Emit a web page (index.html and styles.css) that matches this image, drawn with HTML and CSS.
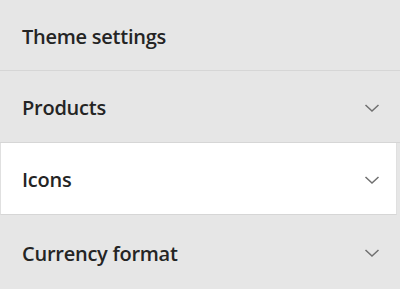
FILE: index.html
```html
<!DOCTYPE html>
<html>
<head>
<meta charset="utf-8">
<link rel="stylesheet" href="styles.css">
</head>
<body>
<div class="panel">
  <div class="row header"><span class="label">Theme settings</span></div>
  <div class="row"><span class="label">Products</span>
    <svg class="chev" width="16" height="10" viewBox="0 0 16 10"><path d="M1.5 2 L8 8 L14.5 2" fill="none" stroke="#707070" stroke-width="1.5"/></svg>
  </div>
  <div class="row active"><span class="label">Icons</span>
    <svg class="chev" width="16" height="10" viewBox="0 0 16 10"><path d="M1.5 2 L8 8 L14.5 2" fill="none" stroke="#707070" stroke-width="1.5"/></svg>
  </div>
  <div class="row last"><span class="label">Currency format</span>
    <svg class="chev" width="16" height="10" viewBox="0 0 16 10"><path d="M1.5 2 L8 8 L14.5 2" fill="none" stroke="#707070" stroke-width="1.5"/></svg>
  </div>
</div>
</body>
</html>
```
FILE: styles.css
```css
html, body {
  margin: 0;
  padding: 0;
  background: #e6e6e6;
}
.panel {
  display: flex;
  flex-direction: column;
  width: 400px;
  height: 289px;
  font-family: "Open Sans", "Noto Sans", sans-serif;
}
.row {
  display: flex;
  align-items: center;
  justify-content: space-between;
  padding: 2px 20px 0 22px;
  border-bottom: 1px solid #d6d6d6;
  box-sizing: border-box;
  height: 72px;
}
.row.header {
  height: 71px;
}
.row.last {
  border-bottom: none;
  flex: 1;
}
.row.active {
  background: #ffffff;
  margin-right: 3px;
  border-left: 1px solid #e0e0e0;
  border-right: 1px solid #e0e0e0;
  padding-left: 21px;
  padding-right: 16px;
}
.label {
  font-size: 20px;
  font-weight: 560;
  color: #242424;
  letter-spacing: -0.25px;
}
.chev {
  display: block;
}
```
